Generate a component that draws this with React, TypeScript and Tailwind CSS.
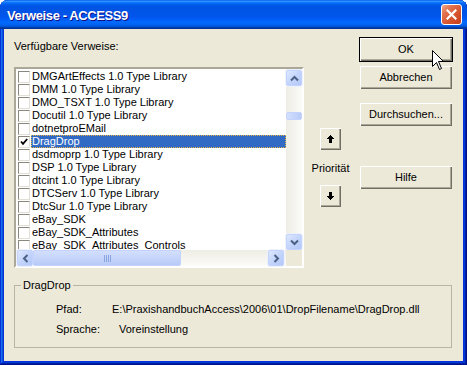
import React from 'react';

const REFS = [
  'DMGArtEffects 1.0 Type Library',
  'DMM 1.0 Type Library',
  'DMO_TSXT 1.0 Type Library',
  'Docutil 1.0 Type Library',
  'dotnetproEMail',
  'DragDrop',
  'dsdmoprp 1.0 Type Library',
  'DSP 1.0 Type Library',
  'dtcint 1.0 Type Library',
  'DTCServ 1.0 Type Library',
  'DtcSur 1.0 Type Library',
  'eBay_SDK',
  'eBay_SDK_Attributes',
  'eBay_SDK_Attributes_Controls',
];

const SELECTED = 'DragDrop';

const BEVEL =
  'bg-[#ece9d8] shadow-[inset_1px_1px_0_#fff,inset_-1px_-1px_0_#716f64,inset_-2px_-2px_0_#aca899]';

// ── little glyphs ────────────────────────────────────────────────
function Chevron({ dir }: { dir: 'up' | 'down' | 'left' | 'right' }) {
  const rot = { up: 0, right: 90, down: 180, left: 270 }[dir];
  return (
    <svg width="9" height="9" viewBox="0 0 9 9" style={{ transform: `rotate(${rot}deg)` }}>
      <path d="M1 6.5 L4.5 3 L8 6.5" fill="none" stroke="#4d6185" strokeWidth="2" />
    </svg>
  );
}

function BlockArrow({ down }: { down?: boolean }) {
  return (
    <svg width="7" height="8" viewBox="0 0 7 8" shapeRendering="crispEdges" className={down ? 'rotate-180' : ''}>
      <rect x="3" y="0" width="1" height="1" fill="#000" />
      <rect x="2" y="1" width="3" height="1" fill="#000" />
      <rect x="1" y="2" width="5" height="1" fill="#000" />
      <rect x="0" y="3" width="7" height="1" fill="#000" />
      <rect x="2" y="4" width="3" height="4" fill="#000" />
    </svg>
  );
}

function ScrollBtn({ dir }: { dir: 'up' | 'down' | 'left' | 'right' }) {
  return (
    <div className="flex h-[16px] w-[16px] shrink-0 items-center justify-center rounded-[2px] border border-[#c3d3fd] bg-[linear-gradient(135deg,#dde7fe_0%,#c4d5fc_50%,#b3c8f7_100%)] shadow-[0_0_0_1px_#eef2fb]">
      <Chevron dir={dir} />
    </div>
  );
}

function Btn({ children, isDefault }: { children: React.ReactNode; isDefault?: boolean }) {
  return (
    <button
      className={`flex h-[23px] w-[92px] items-center justify-center text-[11px] text-black ${BEVEL} ${
        isDefault ? 'outline outline-1 outline-black' : ''
      }`}
    >
      {children}
    </button>
  );
}

export default function App() {
  return (
    <div className="relative h-[365px] w-[467px] overflow-hidden bg-white font-['Liberation_Sans',Arial,sans-serif] text-[11px] text-black">
      <div className="flex h-full flex-col rounded-t-[8px] bg-[#0831d9] shadow-[inset_-1px_-1px_#00138c,inset_1px_1px_#0831d9,inset_-2px_-2px_#001ea0,inset_2px_2px_#166aee,inset_-3px_-3px_#003bda,inset_3px_3px_#0855dd]">
        {/* ── Title bar ───────────────────────────────────────── */}
        <div className="flex h-[29px] shrink-0 items-center justify-between rounded-t-[8px] bg-[linear-gradient(to_bottom,#0058ee_0%,#3593ff_4%,#288eff_6%,#127dff_8%,#036ffc_10%,#0262ee_14%,#0057e5_20%,#0054e3_24%,#0055eb_56%,#005bf5_66%,#026afe_76%,#0062ef_86%,#0052d6_92%,#0040ab_94%,#003092_100%)] pl-[7px] pr-[5px]">
          <span className="pt-[2px] text-[13px] font-bold tracking-[-0.4px] text-white [text-shadow:1px_1px_#0f1089]">
            Verweise - ACCESS9
          </span>
          <div className="flex h-[21px] w-[21px] items-center justify-center rounded-[3px] border border-white bg-[linear-gradient(135deg,#f2a98c_0%,#e2734e_28%,#d4522c_65%,#c43f1c_100%)]">
            <svg width="11" height="11" viewBox="0 0 11 11">
              <path d="M1.5 1.5 L9.5 9.5 M9.5 1.5 L1.5 9.5" stroke="#fff" strokeWidth="2.2" strokeLinecap="square" />
            </svg>
          </div>
        </div>

        {/* ── Dialog body ─────────────────────────────────────── */}
        <div className="mx-[4px] mb-[4px] flex flex-1 flex-col bg-[#ece9d8] pl-[10px] pt-[9px]">
          <div className="flex">
            {/* list column */}
            <div className="flex w-[290px] flex-col">
              <span className="mt-[2px] leading-[13px]">Verfügbare Verweise:</span>
              <div className="mt-[14px] h-[201px] border-2 border-b-[#fff] border-l-[#aca899] border-r-[#fff] border-t-[#aca899] bg-white">
                <div className="grid h-full grid-cols-[1fr_16px] grid-rows-[1fr_16px]">
                  <div className="overflow-hidden pt-[1px]">
                    {REFS.map((name) => {
                      const sel = name === SELECTED;
                      return (
                        <div key={name} className="flex h-[13px] items-center">
                          <span className="ml-[2px] flex h-[12px] w-[12px] shrink-0 items-center justify-center border border-b-[#e2e0d6] border-l-[#8a887e] border-r-[#e2e0d6] border-t-[#8a887e] bg-white">
                            {sel && (
                              <svg width="8" height="8" viewBox="0 0 8 8">
                                <path d="M1 3.5 L3 5.8 L7.2 1" fill="none" stroke="#000" strokeWidth="1.8" />
                              </svg>
                            )}
                          </span>
                          <span
                            className={`ml-[1px] flex h-[13px] flex-1 items-center whitespace-nowrap border leading-[13px] ${
                              sel ? 'border-dotted border-[#e8b040] bg-[#316ac5] text-white' : 'border-transparent'
                            }`}
                          >
                            {name}
                          </span>
                        </div>
                      );
                    })}
                  </div>

                  {/* vertical scrollbar */}
                  <div className="flex flex-col bg-[linear-gradient(to_right,#eeede5,#fbfbf8)] pt-[1px]">
                    <ScrollBtn dir="up" />
                    <div className="mt-[26px] h-[8px] w-[16px] rounded-[2px] border border-[#c3d3fd] bg-[linear-gradient(to_right,#d3dffd,#b8cbf7)]" />
                    <div className="mt-auto">
                      <ScrollBtn dir="down" />
                    </div>
                  </div>

                  {/* horizontal scrollbar */}
                  <div className="flex bg-[linear-gradient(to_bottom,#eeede5,#fbfbf8)] pl-[1px]">
                    <ScrollBtn dir="left" />
                    <div className="flex h-[16px] w-[148px] items-center justify-center rounded-[2px] border border-[#c3d3fd] bg-[linear-gradient(to_bottom,#d3dffd,#b8cbf7)]">
                      <div className="flex gap-[1px]">
                        {[0, 1, 2, 3].map((i) => (
                          <span key={i} className="h-[7px] w-[1px] bg-[#8ca4e0]" />
                        ))}
                      </div>
                    </div>
                    <div className="ml-auto mr-[2px]">
                      <ScrollBtn dir="right" />
                    </div>
                  </div>
                  <div className="bg-[#ece9d8]" />
                </div>
              </div>
            </div>

            {/* priority column */}
            <div className="ml-[8px] flex w-[37px] flex-col items-center">
              <button className={`mt-[90px] flex h-[22px] w-[21px] items-center justify-center ${BEVEL}`}>
                <BlockArrow />
              </button>
              <span className="mt-[12px] whitespace-nowrap leading-[13px]">Priorität</span>
              <button className={`mt-[10px] flex h-[22px] w-[21px] items-center justify-center ${BEVEL}`}>
                <BlockArrow down />
              </button>
            </div>

            {/* buttons column */}
            <div className="ml-[11px] flex flex-col">
              <Btn isDefault>OK</Btn>
              <div className="mt-[5px]">
                <Btn>Abbrechen</Btn>
              </div>
              <div className="mt-[14px]">
                <Btn>Durchsuchen...</Btn>
              </div>
              <div className="mt-[40px]">
                <Btn>Hilfe</Btn>
              </div>
            </div>
          </div>

          {/* ── Details group ─────────────────────────────────── */}
          <fieldset className="mt-[10px] w-[438px] border border-[#b8b5a6] pb-[11px] pt-[11px]">
            <legend className="ml-[6px] px-[2px] leading-[14px]">DragDrop</legend>
            <div className="flex flex-col gap-[7px] pl-[41px] leading-[13px]">
              <div className="flex">
                <span className="w-[56px]">Pfad:</span>
                <span>E:\PraxishandbuchAccess\2006\01\DropFilename\DragDrop.dll</span>
              </div>
              <div className="flex">
                <span className="w-[56px]">Sprache:</span>
                <span className="pl-[7px]">Voreinstellung</span>
              </div>
            </div>
          </fieldset>
        </div>
      </div>

      {/* mouse pointer over the OK button */}
      <svg className="absolute left-[432px] top-[50px]" width="13" height="21" viewBox="0 0 13 21">
        <path d="M0.5 0.5 L0.5 16.5 L4.5 12.5 L7.5 19.5 L9.5 18.5 L6.5 11.5 L11.5 11.5 Z" fill="#fff" stroke="#000" strokeWidth="1" />
      </svg>
    </div>
  );
}
